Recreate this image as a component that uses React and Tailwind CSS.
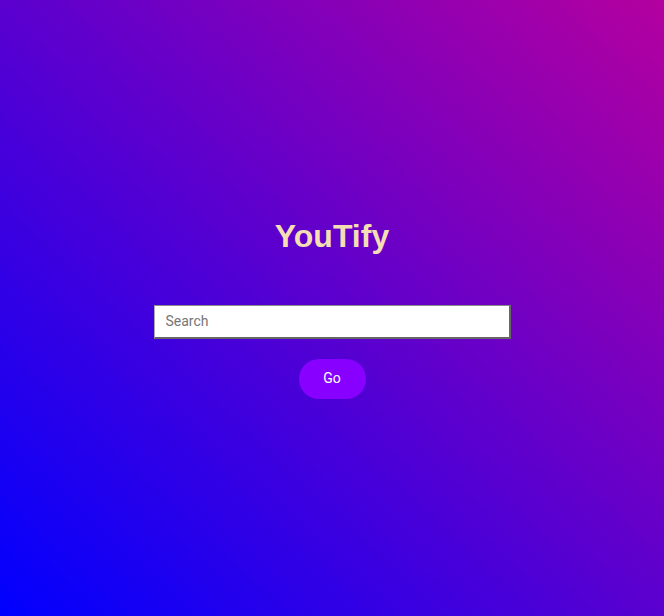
export default function App() {
  return (
    <div className="min-h-screen w-full flex flex-col items-center justify-center bg-[linear-gradient(to_top_right,#0000ff,#b4009f)]">
      <h1 className="text-[32px] leading-[37px] font-bold text-[#f5deb3] mb-[50px] font-['Liberation_Sans',Arial,sans-serif]">
        YouTify
      </h1>
      <input
        type="text"
        placeholder="Search"
        className="w-[357px] h-[34px] bg-white pl-[11px] text-[14px] text-[#333] placeholder:text-[#757575] outline-none border-l border-t border-l-[#a9a9a9] border-t-[#8a8a8a] border-r-2 border-b-2 border-r-[#666] border-b-[#666] font-['Roboto','Liberation_Sans',sans-serif]"
      />
      <button className="mt-[20px] w-[67px] h-[40px] rounded-full bg-[#8800ff] text-white text-[14px] font-normal font-['Roboto','Liberation_Sans',sans-serif]">
        Go
      </button>
    </div>
  );
}
